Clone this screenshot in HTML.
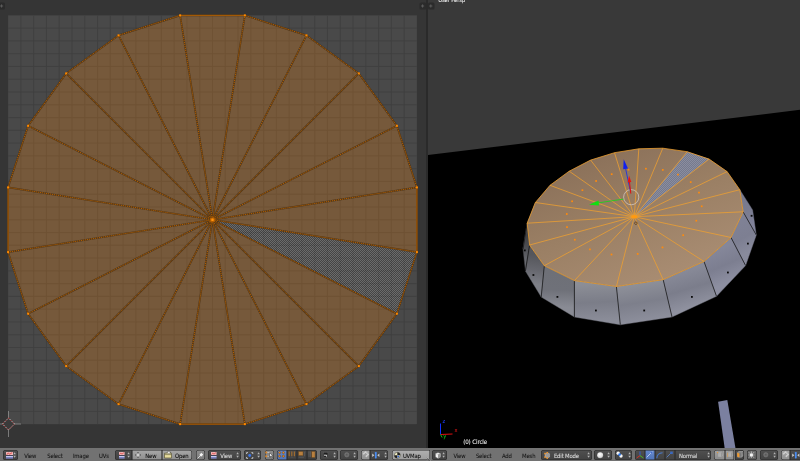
<!DOCTYPE html>
<html><head><meta charset="utf-8"><title>Blender</title>
<style>
html,body{margin:0;padding:0;}
body{width:800px;height:461px;overflow:hidden;background:#353535;position:relative;font-family:"Liberation Sans","DejaVu Sans",sans-serif;}
.t{position:absolute;white-space:nowrap;font-family:"DejaVu Sans Condensed","DejaVu Sans","Liberation Sans",sans-serif;font-size:5.9px;letter-spacing:-0.15px;line-height:7px;height:7px;color:#0a0a0a;-webkit-text-stroke:0.06px currentColor;}
.tl{position:absolute;left:0;top:0;width:800px;height:461px;will-change:transform;}
.hdr{position:absolute;height:14px;background:#727272;}
.b{position:absolute;top:450px;height:9.6px;box-sizing:border-box;box-shadow:inset 0 0 0 0.55px #2a2a2a;}
.i{position:absolute;overflow:visible;}
.dk{background:linear-gradient(#505050,#424242);}
.dk2{background:linear-gradient(#4a4a4a,#3c3c3c);}
.md{background:linear-gradient(#8e8e8e,#7c7c7c);}
.md2{background:linear-gradient(#6c6c6c,#5c5c5c);}
.lt{background:linear-gradient(#a8a8a8,#8e8e8e);}
.lt2{background:linear-gradient(#b0b0b0,#9c9c9c);}
.lt3{background:linear-gradient(#a2a2a2,#8c8c8c);}
.bl{background:linear-gradient(#6488cc,#5074b8);}
</style></head><body>
<svg width="800" height="461" viewBox="0 0 800 461" style="position:absolute;left:0;top:0"><defs>
<pattern id="chk" width="2" height="2" patternUnits="userSpaceOnUse"><rect width="2" height="2" fill="#000" fill-opacity="0.05"/><rect width="1" height="1" fill="#fff" fill-opacity="0.2"/><rect x="1" y="1" width="1" height="1" fill="#fff" fill-opacity="0.2"/></pattern>
<pattern id="chk3" width="2" height="2" patternUnits="userSpaceOnUse"><rect width="2" height="2" fill="#767a8c"/><rect width="1" height="1" fill="#8a8da0"/><rect x="1" y="1" width="1" height="1" fill="#8a8da0"/></pattern>
<clipPath id="cl"><rect x="0" y="0" width="426" height="448"/></clipPath>
<clipPath id="cr"><rect x="428" y="0" width="372" height="448"/></clipPath>
<linearGradient id="topg" gradientUnits="userSpaceOnUse" x1="605" y1="150" x2="660" y2="287"><stop offset="0" stop-color="#8b715a"/><stop offset="0.45" stop-color="#9a7f64"/><stop offset="1" stop-color="#a98d73"/></linearGradient>
</defs><rect x="0" y="0" width="426" height="448" fill="#353535"/><rect x="8.1" y="15.35" width="408.8" height="408.8" fill="#494949"/><path d="M20.88 15.35V424.15000000000003M8.1 28.12H416.90000000000003M33.65 15.35V424.15000000000003M8.1 40.90H416.90000000000003M46.43 15.35V424.15000000000003M8.1 53.68H416.90000000000003M59.20 15.35V424.15000000000003M8.1 66.45H416.90000000000003M71.97 15.35V424.15000000000003M8.1 79.22H416.90000000000003M84.75 15.35V424.15000000000003M8.1 92.00H416.90000000000003M97.52 15.35V424.15000000000003M8.1 104.77H416.90000000000003M110.30 15.35V424.15000000000003M8.1 117.55H416.90000000000003M123.08 15.35V424.15000000000003M8.1 130.33H416.90000000000003M135.85 15.35V424.15000000000003M8.1 143.10H416.90000000000003M148.62 15.35V424.15000000000003M8.1 155.88H416.90000000000003M161.40 15.35V424.15000000000003M8.1 168.65H416.90000000000003M174.18 15.35V424.15000000000003M8.1 181.43H416.90000000000003M186.95 15.35V424.15000000000003M8.1 194.20H416.90000000000003M199.72 15.35V424.15000000000003M8.1 206.97H416.90000000000003M212.50 15.35V424.15000000000003M8.1 219.75H416.90000000000003M225.28 15.35V424.15000000000003M8.1 232.53H416.90000000000003M238.05 15.35V424.15000000000003M8.1 245.30H416.90000000000003M250.82 15.35V424.15000000000003M8.1 258.07H416.90000000000003M263.60 15.35V424.15000000000003M8.1 270.85H416.90000000000003M276.38 15.35V424.15000000000003M8.1 283.63H416.90000000000003M289.15 15.35V424.15000000000003M8.1 296.40H416.90000000000003M301.93 15.35V424.15000000000003M8.1 309.18H416.90000000000003M314.70 15.35V424.15000000000003M8.1 321.95H416.90000000000003M327.48 15.35V424.15000000000003M8.1 334.73H416.90000000000003M340.25 15.35V424.15000000000003M8.1 347.50H416.90000000000003M353.03 15.35V424.15000000000003M8.1 360.28H416.90000000000003M365.80 15.35V424.15000000000003M8.1 373.05H416.90000000000003M378.58 15.35V424.15000000000003M8.1 385.83H416.90000000000003M391.35 15.35V424.15000000000003M8.1 398.60H416.90000000000003M404.13 15.35V424.15000000000003M8.1 411.38H416.90000000000003" stroke="#3f3f3f" stroke-width="0.9" fill="none"/><path d="M212.5 219.75L416.90 187.38L396.89 125.80ZM212.5 219.75L396.89 125.80L358.84 73.41ZM212.5 219.75L358.84 73.41L306.45 35.36ZM212.5 219.75L306.45 35.36L244.87 15.35ZM212.5 219.75L244.87 15.35L180.13 15.35ZM212.5 219.75L180.13 15.35L118.55 35.36ZM212.5 219.75L118.55 35.36L66.16 73.41ZM212.5 219.75L66.16 73.41L28.11 125.80ZM212.5 219.75L28.11 125.80L8.10 187.38ZM212.5 219.75L8.10 187.38L8.10 252.12ZM212.5 219.75L8.10 252.12L28.11 313.70ZM212.5 219.75L28.11 313.70L66.16 366.09ZM212.5 219.75L66.16 366.09L118.55 404.14ZM212.5 219.75L118.55 404.14L180.13 424.15ZM212.5 219.75L180.13 424.15L244.87 424.15ZM212.5 219.75L244.87 424.15L306.45 404.14ZM212.5 219.75L306.45 404.14L358.84 366.09ZM212.5 219.75L358.84 366.09L396.89 313.70ZM212.5 219.75L416.90 252.12L416.90 187.38Z" fill="rgb(255,138,16)" fill-opacity="0.247" stroke="none"/><path d="M212.5 219.75L396.89 313.70L416.90 252.12Z" fill="url(#chk)"/><path d="M416.90 187.38L396.89 125.80M212.5 219.75L416.90 187.38M396.89 125.80L358.84 73.41M212.5 219.75L396.89 125.80M358.84 73.41L306.45 35.36M212.5 219.75L358.84 73.41M306.45 35.36L244.87 15.35M212.5 219.75L306.45 35.36M244.87 15.35L180.13 15.35M212.5 219.75L244.87 15.35M180.13 15.35L118.55 35.36M212.5 219.75L180.13 15.35M118.55 35.36L66.16 73.41M212.5 219.75L118.55 35.36M66.16 73.41L28.11 125.80M212.5 219.75L66.16 73.41M28.11 125.80L8.10 187.38M212.5 219.75L28.11 125.80M8.10 187.38L8.10 252.12M212.5 219.75L8.10 187.38M8.10 252.12L28.11 313.70M212.5 219.75L8.10 252.12M28.11 313.70L66.16 366.09M212.5 219.75L28.11 313.70M66.16 366.09L118.55 404.14M212.5 219.75L66.16 366.09M118.55 404.14L180.13 424.15M212.5 219.75L118.55 404.14M180.13 424.15L244.87 424.15M212.5 219.75L180.13 424.15M244.87 424.15L306.45 404.14M212.5 219.75L244.87 424.15M306.45 404.14L358.84 366.09M212.5 219.75L306.45 404.14M358.84 366.09L396.89 313.70M212.5 219.75L358.84 366.09M396.89 313.70L416.90 252.12M212.5 219.75L396.89 313.70M416.90 252.12L416.90 187.38M212.5 219.75L416.90 252.12" stroke="#4c341a" stroke-width="1.7" fill="none"/><g stroke="#b46000" stroke-width="1.0" stroke-dasharray="1.2 0.8" fill="none"><path d="M416.90 187.38L396.89 125.80" stroke-dashoffset="0.52"/><path d="M416.90 187.38L212.5 219.75" stroke-dashoffset="1.20"/><path d="M396.89 125.80L358.84 73.41" stroke-dashoffset="0.81"/><path d="M396.89 125.80L212.5 219.75" stroke-dashoffset="1.33"/><path d="M358.84 73.41L306.45 35.36" stroke-dashoffset="1.38"/><path d="M358.84 73.41L212.5 219.75" stroke-dashoffset="0.14"/><path d="M306.45 35.36L244.87 15.35" stroke-dashoffset="0.03"/><path d="M306.45 35.36L212.5 219.75" stroke-dashoffset="1.84"/><path d="M244.87 15.35L180.13 15.35" stroke-dashoffset="0.57" stroke-dasharray="none"/><path d="M244.87 15.35L212.5 219.75" stroke-dashoffset="0.52"/><path d="M180.13 15.35L118.55 35.36" stroke-dashoffset="2.19"/><path d="M180.13 15.35L212.5 219.75" stroke-dashoffset="1.03"/><path d="M118.55 35.36L66.16 73.41" stroke-dashoffset="1.84"/><path d="M118.55 35.36L212.5 219.75" stroke-dashoffset="1.05"/><path d="M66.16 73.41L28.11 125.80" stroke-dashoffset="1.41"/><path d="M66.16 73.41L212.5 219.75" stroke-dashoffset="0.33"/><path d="M28.11 125.80L8.10 187.38" stroke-dashoffset="1.40"/><path d="M28.11 125.80L212.5 219.75" stroke-dashoffset="1.91"/><path d="M8.10 187.38L8.10 252.12" stroke-dashoffset="1.15" stroke-dasharray="none"/><path d="M8.10 187.38L212.5 219.75" stroke-dashoffset="1.63"/><path d="M8.10 252.12L28.11 313.70" stroke-dashoffset="1.48"/><path d="M8.10 252.12L212.5 219.75" stroke-dashoffset="0.14"/><path d="M28.11 313.70L66.16 366.09" stroke-dashoffset="1.67"/><path d="M28.11 313.70L212.5 219.75" stroke-dashoffset="1.30"/><path d="M66.16 366.09L118.55 404.14" stroke-dashoffset="0.66"/><path d="M66.16 366.09L212.5 219.75" stroke-dashoffset="0.07"/><path d="M118.55 404.14L180.13 424.15" stroke-dashoffset="1.90"/><path d="M118.55 404.14L212.5 219.75" stroke-dashoffset="1.04"/><path d="M180.13 424.15L244.87 424.15" stroke-dashoffset="1.58" stroke-dasharray="none"/><path d="M180.13 424.15L212.5 219.75" stroke-dashoffset="1.93"/><path d="M244.87 424.15L306.45 404.14" stroke-dashoffset="1.57"/><path d="M244.87 424.15L212.5 219.75" stroke-dashoffset="2.03"/><path d="M306.45 404.14L358.84 366.09" stroke-dashoffset="0.87"/><path d="M306.45 404.14L212.5 219.75" stroke-dashoffset="1.76"/><path d="M358.84 366.09L396.89 313.70" stroke-dashoffset="0.98"/><path d="M358.84 366.09L212.5 219.75" stroke-dashoffset="2.06"/><path d="M396.89 313.70L416.90 252.12" stroke-dashoffset="1.93"/><path d="M396.89 313.70L212.5 219.75" stroke-dashoffset="0.21"/><path d="M416.90 252.12L416.90 187.38" stroke-dashoffset="0.30" stroke-dasharray="none"/><path d="M416.90 252.12L212.5 219.75" stroke-dashoffset="0.48"/></g><rect x="415.90" y="186.38" width="2" height="2" fill="#ff8a00"/><rect x="395.89" y="124.80" width="2" height="2" fill="#ff8a00"/><rect x="357.84" y="72.41" width="2" height="2" fill="#ff8a00"/><rect x="305.45" y="34.36" width="2" height="2" fill="#ff8a00"/><rect x="243.87" y="14.35" width="2" height="2" fill="#ff8a00"/><rect x="179.13" y="14.35" width="2" height="2" fill="#ff8a00"/><rect x="117.55" y="34.36" width="2" height="2" fill="#ff8a00"/><rect x="65.16" y="72.41" width="2" height="2" fill="#ff8a00"/><rect x="27.11" y="124.80" width="2" height="2" fill="#ff8a00"/><rect x="7.10" y="186.38" width="2" height="2" fill="#ff8a00"/><rect x="7.10" y="251.12" width="2" height="2" fill="#ff8a00"/><rect x="27.11" y="312.70" width="2" height="2" fill="#ff8a00"/><rect x="65.16" y="365.09" width="2" height="2" fill="#ff8a00"/><rect x="117.55" y="403.14" width="2" height="2" fill="#ff8a00"/><rect x="179.13" y="423.15" width="2" height="2" fill="#ff8a00"/><rect x="243.87" y="423.15" width="2" height="2" fill="#ff8a00"/><rect x="305.45" y="403.14" width="2" height="2" fill="#ff8a00"/><rect x="357.84" y="365.09" width="2" height="2" fill="#ff8a00"/><rect x="395.89" y="312.70" width="2" height="2" fill="#ff8a00"/><rect x="415.90" y="251.12" width="2" height="2" fill="#ff8a00"/><circle cx="212.5" cy="219.75" r="2.6" fill="#c06400" fill-opacity="0.7"/><rect x="211.3" y="218.55" width="2.4" height="2.4" rx="0.5" fill="#ff920c"/><g stroke="#aaa" stroke-width="0.6" fill="none"><path d="M8.5 411V437M-4 424H21"/></g><path d="M8.5 418L14.5 424L8.5 430L2.5 424Z" fill="#3a3a3a" stroke="#c02020" stroke-width="0.8" stroke-dasharray="1.5 1.5"/><path d="M8.5 418L14.5 424L8.5 430L2.5 424Z" fill="none" stroke="#ddd" stroke-width="0.8" stroke-dasharray="1.5 1.5" stroke-dashoffset="1.5"/><rect x="-2" y="2.5" width="7" height="7" rx="1.5" fill="#2b2b2b"/><path d="M0 6H3.2M1.6 4.4V7.6" stroke="#666" stroke-width="0.8"/><rect x="419.5" y="2.5" width="7" height="7" rx="1.5" fill="#2b2b2b"/><path d="M421 6H424.2M422.6 4.4V7.6" stroke="#666" stroke-width="0.8"/><rect x="426" y="0" width="2" height="461" fill="#2a2a2a"/><rect x="428" y="0" width="372" height="448" fill="#393939"/><path d="M428 155.1L800 109.8V448H428Z" fill="#000"/><rect x="428" y="2.5" width="6.5" height="7" rx="1.5" fill="#2b2b2b"/><path d="M429.2 6H432.4M430.8 4.4V7.6" stroke="#666" stroke-width="0.8"/><path d="M718.1 401.7L727.3 400L735.5 448.2H724.7Z" fill="#7b80a0"/><linearGradient id="sg5" gradientUnits="userSpaceOnUse" x1="741.5" y1="200.8" x2="754.5" y2="222.4"><stop offset="0" stop-color="#787a8e"/><stop offset="0.5" stop-color="#7a7c90"/><stop offset="1" stop-color="#80829a"/></linearGradient><path d="M739.8 189.7L743.1 211.8L756.3 235.0L752.6 209.9Z" fill="url(#sg5)" stroke="#7a7c90" stroke-width="0.4"/><linearGradient id="sg6" gradientUnits="userSpaceOnUse" x1="737.0" y1="224.7" x2="751.0" y2="250.3"><stop offset="0" stop-color="#7f8195"/><stop offset="0.5" stop-color="#7d7f92"/><stop offset="1" stop-color="#888a9c"/></linearGradient><path d="M743.1 211.8L731.0 237.5L745.6 265.6L756.3 235.0Z" fill="url(#sg6)" stroke="#7d7f92" stroke-width="0.4"/><linearGradient id="sg7" gradientUnits="userSpaceOnUse" x1="717.5" y1="249.5" x2="731.0" y2="281.0"><stop offset="0" stop-color="#85879a"/><stop offset="0.5" stop-color="#7c7e90"/><stop offset="1" stop-color="#8d8fa1"/></linearGradient><path d="M731.0 237.5L704.0 261.5L716.5 296.3L745.6 265.6Z" fill="url(#sg7)" stroke="#7c7e90" stroke-width="0.4"/><linearGradient id="sg8" gradientUnits="userSpaceOnUse" x1="683.6" y1="270.6" x2="694.2" y2="306.6"><stop offset="0" stop-color="#888a98"/><stop offset="0.5" stop-color="#7b7d8b"/><stop offset="1" stop-color="#8f919f"/></linearGradient><path d="M704.0 261.5L663.2 279.7L672.0 317.0L716.5 296.3Z" fill="url(#sg8)" stroke="#7b7d8b" stroke-width="0.4"/><linearGradient id="sg9" gradientUnits="userSpaceOnUse" x1="639.8" y1="283.1" x2="646.1" y2="320.9"><stop offset="0" stop-color="#8e9099"/><stop offset="0.5" stop-color="#7d7f8b"/><stop offset="1" stop-color="#8d8f9c"/></linearGradient><path d="M663.2 279.7L616.4 286.5L620.3 324.8L672.0 317.0Z" fill="url(#sg9)" stroke="#7d7f8b" stroke-width="0.4"/><linearGradient id="sg10" gradientUnits="userSpaceOnUse" x1="595.4" y1="283.6" x2="597.3" y2="320.9"><stop offset="0" stop-color="#8c8e96"/><stop offset="0.5" stop-color="#7b7d88"/><stop offset="1" stop-color="#8b8d99"/></linearGradient><path d="M616.4 286.5L574.4 280.6L574.4 317.0L620.3 324.8Z" fill="url(#sg10)" stroke="#7b7d88" stroke-width="0.4"/><linearGradient id="sg11" gradientUnits="userSpaceOnUse" x1="559.3" y1="273.1" x2="557.8" y2="307.0"><stop offset="0" stop-color="#6e7077"/><stop offset="0.5" stop-color="#6f7179"/><stop offset="1" stop-color="#898b94"/></linearGradient><path d="M574.4 280.6L544.3 265.7L541.2 297.0L574.4 317.0Z" fill="url(#sg11)" stroke="#6f7179" stroke-width="0.4"/><linearGradient id="sg12" gradientUnits="userSpaceOnUse" x1="537.0" y1="255.3" x2="533.3" y2="284.0"><stop offset="0" stop-color="#55565b"/><stop offset="0.5" stop-color="#66676e"/><stop offset="1" stop-color="#7d7f87"/></linearGradient><path d="M544.3 265.7L529.6 245.0L525.4 271.0L541.2 297.0Z" fill="url(#sg12)" stroke="#66676e" stroke-width="0.4"/><linearGradient id="sg13" gradientUnits="userSpaceOnUse" x1="528.4" y1="234.1" x2="524.2" y2="260.0"><stop offset="0" stop-color="#3e3f42"/><stop offset="0.5" stop-color="#4c4d52"/><stop offset="1" stop-color="#66686e"/></linearGradient><path d="M529.6 245.0L527.2 223.2L523.0 249.0L525.4 271.0Z" fill="url(#sg13)" stroke="#4c4d52" stroke-width="0.4"/><linearGradient id="sg14" gradientUnits="userSpaceOnUse" x1="531.3" y1="212.8" x2="525.2" y2="237.5"><stop offset="0" stop-color="#48494c"/><stop offset="0.5" stop-color="#4c4d50"/><stop offset="1" stop-color="#54565a"/></linearGradient><path d="M527.2 223.2L535.4 202.5L527.5 226.0L523.0 249.0Z" fill="url(#sg14)" stroke="#4c4d50" stroke-width="0.4"/><path d="M743.1 211.8L756.3 235.0M731.0 237.5L745.6 265.6M704.0 261.5L716.5 296.3M663.2 279.7L672.0 317.0M616.4 286.5L620.3 324.8M574.4 280.6L574.4 317.0M544.3 265.7L541.2 297.0M529.6 245.0L525.4 271.0M527.2 223.2L523.0 249.0" stroke="#111" stroke-width="0.7" fill="none"/><rect x="750.7" y="214.9" width="1.8" height="1.8" fill="#0a0a0a"/><rect x="747.0" y="242.7" width="1.8" height="1.8" fill="#0a0a0a"/><rect x="727.0" y="271.6" width="1.8" height="1.8" fill="#0a0a0a"/><rect x="691.0" y="296.0" width="1.8" height="1.8" fill="#0a0a0a"/><rect x="643.3" y="309.6" width="1.8" height="1.8" fill="#0a0a0a"/><rect x="595.0" y="309.6" width="1.8" height="1.8" fill="#0a0a0a"/><rect x="556.5" y="296.0" width="1.8" height="1.8" fill="#0a0a0a"/><rect x="532.5" y="274.1" width="1.8" height="1.8" fill="#0a0a0a"/><rect x="523.9" y="249.5" width="1.8" height="1.8" fill="#0a0a0a"/><polygon points="638.8,148.8 662.8,148.2 687.2,151.7 709.1,159.1 727.1,171.6 739.8,189.7 743.1,211.8 731.0,237.5 704.0,261.5 663.2,279.7 616.4,286.5 574.4,280.6 544.3,265.7 529.6,245.0 527.2,223.2 535.4,202.5 550.0,185.3 569.2,171.2 590.6,160.1 614.5,152.7" fill="url(#topg)"/><path d="M634.3 216.7L687.2 151.7L709.1 159.1Z" fill="url(#chk3)"/><path d="M638.8 148.8L662.8 148.2M634.3 216.7L638.8 148.8M662.8 148.2L687.2 151.7M634.3 216.7L662.8 148.2M687.2 151.7L709.1 159.1M634.3 216.7L687.2 151.7M709.1 159.1L727.1 171.6M634.3 216.7L709.1 159.1M727.1 171.6L739.8 189.7M634.3 216.7L727.1 171.6M739.8 189.7L743.1 211.8M634.3 216.7L739.8 189.7M743.1 211.8L731.0 237.5M634.3 216.7L743.1 211.8M731.0 237.5L704.0 261.5M634.3 216.7L731.0 237.5M704.0 261.5L663.2 279.7M634.3 216.7L704.0 261.5M663.2 279.7L616.4 286.5M634.3 216.7L663.2 279.7M616.4 286.5L574.4 280.6M634.3 216.7L616.4 286.5M574.4 280.6L544.3 265.7M634.3 216.7L574.4 280.6M544.3 265.7L529.6 245.0M634.3 216.7L544.3 265.7M529.6 245.0L527.2 223.2M634.3 216.7L529.6 245.0M527.2 223.2L535.4 202.5M634.3 216.7L527.2 223.2M535.4 202.5L550.0 185.3M634.3 216.7L535.4 202.5M550.0 185.3L569.2 171.2M634.3 216.7L550.0 185.3M569.2 171.2L590.6 160.1M634.3 216.7L569.2 171.2M590.6 160.1L614.5 152.7M634.3 216.7L590.6 160.1M614.5 152.7L638.8 148.8M634.3 216.7L614.5 152.7" stroke="#eea030" stroke-width="0.78" fill="none"/><rect x="645.05" y="167.85" width="1.7" height="1.7" fill="#ff8a0c"/><rect x="661.95" y="169.05" width="1.7" height="1.7" fill="#ff8a0c"/><rect x="677.15" y="173.75" width="1.7" height="1.7" fill="#ff8a0c"/><rect x="689.85" y="181.25" width="1.7" height="1.7" fill="#ff8a0c"/><rect x="698.15" y="191.75" width="1.7" height="1.7" fill="#ff8a0c"/><rect x="700.85" y="205.45" width="1.7" height="1.7" fill="#ff8a0c"/><rect x="695.45" y="219.85" width="1.7" height="1.7" fill="#ff8a0c"/><rect x="682.35" y="234.35" width="1.7" height="1.7" fill="#ff8a0c"/><rect x="661.65" y="246.55" width="1.7" height="1.7" fill="#ff8a0c"/><rect x="636.85" y="253.05" width="1.7" height="1.7" fill="#ff8a0c"/><rect x="610.65" y="253.65" width="1.7" height="1.7" fill="#ff8a0c"/><rect x="589.05" y="248.55" width="1.7" height="1.7" fill="#ff8a0c"/><rect x="573.95" y="238.85" width="1.7" height="1.7" fill="#ff8a0c"/><rect x="566.15" y="226.25" width="1.7" height="1.7" fill="#ff8a0c"/><rect x="565.95" y="213.15" width="1.7" height="1.7" fill="#ff8a0c"/><rect x="571.25" y="200.45" width="1.7" height="1.7" fill="#ff8a0c"/><rect x="581.55" y="189.35" width="1.7" height="1.7" fill="#ff8a0c"/><rect x="595.25" y="180.15" width="1.7" height="1.7" fill="#ff8a0c"/><rect x="610.85" y="173.35" width="1.7" height="1.7" fill="#ff8a0c"/><rect x="627.65" y="168.85" width="1.7" height="1.7" fill="#ff8a0c"/><ellipse cx="634.3" cy="216.7" rx="3.1" ry="1.7" fill="#ff9a10"/><circle cx="635.9" cy="223.2" r="1.25" fill="#c09868" stroke="#40260e" stroke-width="0.65"/><circle cx="631.2" cy="197.2" r="7.6" fill="none" stroke="#d8d0c8" stroke-width="0.7"/><path d="M623.4 199.1L598.2 202.9" stroke="#1fd01f" stroke-width="0.9"/><path d="M589 204.7L598.6 200.6L598.9 205.4Z" fill="#10e010"/><path d="M630.3 190.8L625.6 168.7" stroke="#2030e0" stroke-width="0.9"/><path d="M623.7 159.3L628 168.4L623.2 169.2Z" fill="#1020f0"/><path d="M630.8 193.6L629.5 182" stroke="#e01010" stroke-width="1"/><path d="M629.1 175.8L631.3 182L627.6 182.4Z" fill="#f01010"/><path d="M440.5 434.5V423.5" stroke="#1030ff" stroke-width="1"/><path d="M440.5 434.5L452.5 434" stroke="#e01010" stroke-width="1"/><path d="M440.5 434.5L442.2 437.5" stroke="#10c010" stroke-width="1"/></svg>
<div class="tl"><div class="hdr" style="left:0;width:427.4px;top:447.5px"></div>
<div class="hdr" style="left:427.4px;width:372.6px;top:447.8px"></div>
<div class="b dk" style="left:3.4px;width:14.5px;border-radius:2.5px;"></div>
<svg class="i" style="left:5.6px;top:451.6px" width="7" height="6.6" viewBox="0 0 7 6.6"><g transform="scale(1.25,1)"><rect x="0" y="0" width="5.6" height="3.2" fill="#efb4b4"/><path d="M0.5 2.5L1.8 1.2L3 2.1L4.9 0.7" stroke="#d84848" stroke-width="0.8" fill="none"/><rect x="0" y="3.1" width="5.6" height="0.8" fill="#2a2a40"/><rect x="0" y="3.9" width="5.6" height="1.2" fill="#c4c8ec"/><rect x="0" y="5.1" width="5.6" height="1.5" fill="#8088cc"/></g></svg>
<svg class="i" style="left:13.4px;top:452.0px" width="3.2" height="6" viewBox="0 0 3.2 6"><path d="M0.3 2.2L1.6 0.2L2.9 2.2ZM0.3 3.8L1.6 5.8L2.9 3.8Z" fill="#b4b4b4"/></svg>
<div class="t" style="left:24.2px;top:452.8px;color:#161616;">View</div>
<div class="t" style="left:47.2px;top:452.8px;color:#161616;">Select</div>
<div class="t" style="left:72.9px;top:452.8px;color:#161616;">Image</div>
<div class="t" style="left:99.0px;top:452.8px;color:#161616;">UVs</div>
<div class="b dk" style="left:115.4px;width:16.6px;border-radius:2.5px 0 0 2.5px;"></div>
<svg class="i" style="left:118.8px;top:451.6px" width="5.6" height="6.6" viewBox="0 0 5.6 6.6"><rect x="0" y="0" width="5.6" height="3.2" fill="#efb4b4"/><path d="M0.5 2.5L1.8 1.2L3 2.1L4.9 0.7" stroke="#d84848" stroke-width="0.8" fill="none"/><rect x="0" y="3.1" width="5.6" height="0.8" fill="#2a2a40"/><rect x="0" y="3.9" width="5.6" height="1.2" fill="#c4c8ec"/><rect x="0" y="5.1" width="5.6" height="1.5" fill="#8088cc"/></svg>
<svg class="i" style="left:126.8px;top:452.0px" width="3.2" height="6" viewBox="0 0 3.2 6"><path d="M0.3 2.2L1.6 0.2L2.9 2.2ZM0.3 3.8L1.6 5.8L2.9 3.8Z" fill="#b4b4b4"/></svg>
<div class="b lt" style="left:132.0px;width:29.6px;border-radius:0;"></div>
<svg class="i" style="left:134.6px;top:452.0px" width="6" height="6" viewBox="0 0 6 6"><path d="M3 0.3V5.7M0.3 3H5.7" stroke="#3a3a3a" stroke-width="1.9"/><path d="M3 0.7V5.3M0.7 3H5.3" stroke="#fff" stroke-width="1.0"/></svg>
<div class="t" style="left:145.3px;top:452.8px;color:#0c0c0c;">New</div>
<div class="b lt" style="left:161.6px;width:30.6px;border-radius:0 2.5px 2.5px 0;"></div>
<svg class="i" style="left:164.2px;top:451.2px" width="8" height="7.4" viewBox="0 0 8 7.4"><path d="M0.5 2.2H2.6L3.2 1.2H6.4V2.2H7.5V6.9H0.5Z" fill="#d9cf92" stroke="#4a4630" stroke-width="0.6"/><path d="M3.6 0.4H6V2.6H3.6Z" fill="#eee" stroke="#555" stroke-width="0.4"/><path d="M0.5 3.6H7.5V6.9H0.5Z" fill="#e6dc9e" stroke="#4a4630" stroke-width="0.5"/></svg>
<div class="t" style="left:175.0px;top:452.8px;color:#0c0c0c;">Open</div>
<div class="b md" style="left:195.9px;width:9.3px;border-radius:2.5px;"></div>
<svg class="i" style="left:197.2px;top:451.6px" width="7" height="7" viewBox="0 0 7 7"><path d="M0.6 6.4L3 4" stroke="#eee" stroke-width="0.8"/><path d="M2 3L4 5L5 4.4L6.4 2.6L4.4 0.6L2.6 2Z" fill="#f4f4f4" stroke="#555" stroke-width="0.4"/></svg>
<div class="b dk" style="left:208.4px;width:32.6px;border-radius:2.5px;"></div>
<svg class="i" style="left:211.4px;top:451.6px" width="5.6" height="6.6" viewBox="0 0 5.6 6.6"><rect x="0" y="0" width="5.6" height="3.2" fill="#efb4b4"/><path d="M0.5 2.5L1.8 1.2L3 2.1L4.9 0.7" stroke="#d84848" stroke-width="0.8" fill="none"/><rect x="0" y="3.1" width="5.6" height="0.8" fill="#2a2a40"/><rect x="0" y="3.9" width="5.6" height="1.2" fill="#c4c8ec"/><rect x="0" y="5.1" width="5.6" height="1.5" fill="#8088cc"/></svg>
<div class="t" style="left:220.2px;top:452.8px;color:#e0e0e0;-webkit-text-stroke:0.04px currentColor;">View</div>
<svg class="i" style="left:236.3px;top:452.0px" width="3.2" height="6" viewBox="0 0 3.2 6"><path d="M0.3 2.2L1.6 0.2L2.9 2.2ZM0.3 3.8L1.6 5.8L2.9 3.8Z" fill="#b4b4b4"/></svg>
<div class="b dk" style="left:244.2px;width:17.2px;border-radius:2.5px;"></div>
<svg class="i" style="left:246.2px;top:451.6px" width="7.4" height="7" viewBox="0 0 7.4 7"><path d="M2 0.6H0.6V2M5.4 0.6H6.8V2M2 6.4H0.6V5M5.4 6.4H6.8V5" stroke="#ddd" stroke-width="0.8" fill="none"/><circle cx="3.7" cy="3.5" r="1.4" fill="#3a78f0"/></svg>
<svg class="i" style="left:256.7px;top:452.0px" width="3.2" height="6" viewBox="0 0 3.2 6"><path d="M0.3 2.2L1.6 0.2L2.9 2.2ZM0.3 3.8L1.6 5.8L2.9 3.8Z" fill="#b4b4b4"/></svg>
<div class="b md" style="left:264.7px;width:9.7px;border-radius:2.5px;"></div>
<svg class="i" style="left:265.4px;top:451.3px" width="9" height="7.6" viewBox="0 0 9 7.6"><rect x="0.3" y="0.6" width="1.8" height="1.8" fill="#e08828"/><rect x="0.3" y="4.4" width="1.8" height="1.8" fill="#e08828"/><path d="M2.4 1.5H5M2.4 5.3H4" stroke="#ddd" stroke-width="0.6"/><path d="M4.6 1.8L7.6 4.6L6.4 4.9L7.2 6.6L6.4 7L5.6 5.3L4.6 6Z" fill="#fff" stroke="#222" stroke-width="0.5"/></svg>
<div class="b bl" style="left:277.1px;width:9.9px;border-radius:2.5px 0 0 2.5px;"></div>
<svg class="i" style="left:278.4px;top:451.4px" width="7.4" height="7" viewBox="0 0 7.4 7"><g fill="#e88a20" stroke="#5a3a10" stroke-width="0.4"><circle cx="1.6" cy="1.6" r="1.1"/><circle cx="5.4" cy="1.6" r="1.1"/><circle cx="1.6" cy="5.2" r="1.1"/><circle cx="5.4" cy="5.2" r="1.1"/></g></svg>
<div class="b dk2" style="left:287.0px;width:9.8px;border-radius:0;"></div>
<svg class="i" style="left:288.2px;top:451.4px" width="7.6" height="7" viewBox="0 0 7.6 7"><path d="M1.2 0.4V5.2M3.8 0.4V5.2M6.4 0.4V5.2" stroke="#a06c30" stroke-width="1.2"/><path d="M0.4 6.2H7.2" stroke="#666" stroke-width="0.6" stroke-dasharray="0.8 0.5"/></svg>
<div class="b dk2" style="left:296.8px;width:9.9px;border-radius:0;"></div>
<svg class="i" style="left:298.0px;top:451.4px" width="7.6" height="7" viewBox="0 0 7.6 7"><rect x="0.6" y="0.6" width="4.4" height="4" fill="#b88040" stroke="#6a4418" stroke-width="0.4"/><path d="M6.4 0.8V5.4M0.6 6.2H6" stroke="#666" stroke-width="0.6"/></svg>
<div class="b dk2" style="left:306.7px;width:10.0px;border-radius:0 2.5px 2.5px 0;"></div>
<svg class="i" style="left:308.0px;top:451.4px" width="7.6" height="7" viewBox="0 0 7.6 7"><path d="M1 0.6V6.2M2.4 0.6V6.2" stroke="#666" stroke-width="0.7"/><rect x="3.8" y="0.5" width="3.2" height="6" fill="#b88040" stroke="#6a4418" stroke-width="0.4"/></svg>
<div class="b dk" style="left:320.3px;width:17.3px;border-radius:2.5px;"></div>
<svg class="i" style="left:323.4px;top:452.0px" width="5.4" height="5.6" viewBox="0 0 5.4 5.6"><rect x="0.3" y="0.3" width="4.6" height="4.8" fill="#1e1e1e" stroke="#666" stroke-width="0.4"/><path d="M1 3.2H3.6V4.6" stroke="#eee" stroke-width="0.9" fill="none"/></svg>
<svg class="i" style="left:332.8px;top:452.0px" width="3.2" height="6" viewBox="0 0 3.2 6"><path d="M0.3 2.2L1.6 0.2L2.9 2.2ZM0.3 3.8L1.6 5.8L2.9 3.8Z" fill="#b4b4b4"/></svg>
<div class="b dk" style="left:340.4px;width:17.5px;border-radius:2.5px;"></div>
<svg class="i" style="left:343.8px;top:452.0px" width="5.6" height="5.6" viewBox="0 0 5.6 5.6"><circle cx="2.8" cy="2.8" r="2.2" fill="#6a6a6a" stroke="#808080" stroke-width="0.5"/><circle cx="2.8" cy="2.8" r="0.7" fill="#555"/></svg>
<svg class="i" style="left:352.9px;top:452.0px" width="3.2" height="6" viewBox="0 0 3.2 6"><path d="M0.3 2.2L1.6 0.2L2.9 2.2ZM0.3 3.8L1.6 5.8L2.9 3.8Z" fill="#b4b4b4"/></svg>
<div class="b lt" style="left:360.8px;width:9.4px;border-radius:2.5px 0 0 2.5px;"></div>
<svg class="i" style="left:362.0px;top:451.4px" width="7.4" height="7" viewBox="0 0 7.4 7"><path d="M1.2 3.2L3.6 0.9L6.2 3.4L3.8 5.8" stroke="#e8e8e8" stroke-width="1.3" fill="none"/><path d="M1.2 3.2L3.6 0.9L6.2 3.4L3.8 5.8" stroke="#777" stroke-width="0.4" fill="none"/></svg>
<div class="b dk" style="left:370.2px;width:17.8px;border-radius:0 2.5px 2.5px 0;"></div>
<svg class="i" style="left:372.2px;top:451.7px" width="7.6" height="6.4" viewBox="0 0 7.6 6.4"><rect x="2.9" y="0" width="1.8" height="6.4" rx="0.6" fill="#4a8cf0"/><path d="M0.2 1.4L2.4 3.2L0.2 5ZM7.4 1.4L5.2 3.2L7.4 5Z" fill="#c8c8c8"/></svg>
<svg class="i" style="left:383.5px;top:452.0px" width="3.2" height="6" viewBox="0 0 3.2 6"><path d="M0.3 2.2L1.6 0.2L2.9 2.2ZM0.3 3.8L1.6 5.8L2.9 3.8Z" fill="#b4b4b4"/></svg>
<div class="b lt2" style="left:391.9px;width:38.1px;border-radius:2.5px 0 0 2.5px;"></div>
<svg class="i" style="left:393.8px;top:451.5px" width="6.6" height="6.6" viewBox="0 0 6.6 6.6"><circle cx="3.3" cy="3.3" r="3" fill="#f0ecc0" stroke="#333" stroke-width="0.5"/><path d="M3.3 0.3A3 3 0 0 1 6.3 3.3H3.3ZM3.3 6.3A3 3 0 0 1 0.3 3.3H3.3Z" fill="#222"/><circle cx="4.3" cy="4.4" r="1" fill="#3060d0"/></svg>
<div class="t" style="left:402.9px;top:452.8px;color:#0c0c0c;">UVMap</div>
<svg class="i" style="left:427.4px;top:456.5px" width="6" height="4.5" viewBox="0 0 6 4.5"><path d="M0 0L4.5 4.5M0 1.6L3 4.6M0 3.2L1.5 4.7" stroke="#bbb" stroke-width="0.5"/><path d="M0 0.8L4 4.8M0 2.4L2.2 4.6" stroke="#333" stroke-width="0.5"/></svg>
<div class="b dk" style="left:432.1px;width:14.5px;border-radius:2.5px;"></div>
<svg class="i" style="left:434.8px;top:451.6px" width="6" height="6.8" viewBox="0 0 6 6.8"><path d="M0.4 1.4L3 0.4L5.6 1.4V5L3 6.4L0.4 5Z" fill="#f2f2f2" stroke="#555" stroke-width="0.4"/><path d="M3 2.4V6.4L5.6 5V1.4Z" fill="#9a9a9a"/><path d="M0.4 1.4L3 2.4L5.6 1.4" stroke="#888" stroke-width="0.3" fill="none"/></svg>
<svg class="i" style="left:442.3px;top:452.0px" width="3.2" height="6" viewBox="0 0 3.2 6"><path d="M0.3 2.2L1.6 0.2L2.9 2.2ZM0.3 3.8L1.6 5.8L2.9 3.8Z" fill="#b4b4b4"/></svg>
<div class="t" style="left:453.4px;top:452.8px;color:#161616;">View</div>
<div class="t" style="left:475.9px;top:452.8px;color:#161616;">Select</div>
<div class="t" style="left:501.9px;top:452.8px;color:#161616;">Add</div>
<div class="t" style="left:522.0px;top:452.8px;color:#161616;">Mesh</div>
<div class="b dk" style="left:541.3px;width:50.4px;border-radius:2.5px;"></div>
<svg class="i" style="left:543.6px;top:451.5px" width="6.4" height="6.8" viewBox="0 0 6.4 6.8"><path d="M1 1.6L3.4 0.6L5.6 1.8V5L3.2 6.2L1 5Z" fill="#9a9a9a" stroke="#ccc" stroke-width="0.4"/><g fill="#f09020"><rect x="0.2" y="0.8" width="1.5" height="1.5"/><rect x="0.2" y="4.4" width="1.5" height="1.5"/><rect x="2.5" y="5.3" width="1.5" height="1.5"/><rect x="2.6" y="0" width="1.4" height="1.4"/></g></svg>
<div class="t" style="left:553.9px;top:452.8px;color:#e0e0e0;-webkit-text-stroke:0.04px currentColor;">Edit Mode</div>
<svg class="i" style="left:586.8px;top:452.0px" width="3.2" height="6" viewBox="0 0 3.2 6"><path d="M0.3 2.2L1.6 0.2L2.9 2.2ZM0.3 3.8L1.6 5.8L2.9 3.8Z" fill="#b4b4b4"/></svg>
<div class="b dk" style="left:594.3px;width:17.4px;border-radius:2.5px;"></div>
<svg class="i" style="left:597.0px;top:451.7px" width="6.4" height="6.4" viewBox="0 0 6.4 6.4"><defs><radialGradient id="sph" cx="0.4" cy="0.35" r="0.7"><stop offset="0" stop-color="#fff"/><stop offset="0.7" stop-color="#ddd"/><stop offset="1" stop-color="#999"/></radialGradient></defs><circle cx="3.2" cy="3.2" r="3" fill="url(#sph)"/></svg>
<svg class="i" style="left:607.2px;top:452.0px" width="3.2" height="6" viewBox="0 0 3.2 6"><path d="M0.3 2.2L1.6 0.2L2.9 2.2ZM0.3 3.8L1.6 5.8L2.9 3.8Z" fill="#b4b4b4"/></svg>
<div class="b dk" style="left:614.7px;width:17.3px;border-radius:2.5px;"></div>
<svg class="i" style="left:616.4px;top:451.4px" width="7.4" height="7.2" viewBox="0 0 7.4 7.2"><circle cx="2.2" cy="2.2" r="1.7" fill="#f4f4f4"/><circle cx="5" cy="5" r="1.7" fill="#f4f4f4"/><circle cx="3.6" cy="3.6" r="1.3" fill="#2a78f0"/></svg>
<svg class="i" style="left:627.5px;top:452.0px" width="3.2" height="6" viewBox="0 0 3.2 6"><path d="M0.3 2.2L1.6 0.2L2.9 2.2ZM0.3 3.8L1.6 5.8L2.9 3.8Z" fill="#b4b4b4"/></svg>
<div class="b dk" style="left:635.2px;width:9.8px;border-radius:2.5px 0 0 2.5px;"></div>
<svg class="i" style="left:636.2px;top:451.2px" width="8" height="7.6" viewBox="0 0 8 7.6"><path d="M4 0.4V4.6" stroke="#3060e0" stroke-width="0.9"/><path d="M4 4.6L0.6 7" stroke="#e03020" stroke-width="0.9"/><path d="M4 4.6L7.4 7" stroke="#50c020" stroke-width="0.9"/></svg>
<div class="b bl" style="left:645.0px;width:9.5px;border-radius:0;"></div>
<svg class="i" style="left:646.2px;top:451.4px" width="7.4" height="7" viewBox="0 0 7.4 7"><path d="M0.6 6.4L5 2" stroke="#dfe8ff" stroke-width="0.7"/><path d="M4 1.6L6.8 0.4L5.6 3.2Z" fill="#1c50c0" stroke="#dfe8ff" stroke-width="0.3"/></svg>
<div class="b dk" style="left:654.5px;width:10.2px;border-radius:0;"></div>
<svg class="i" style="left:655.8px;top:451.6px" width="7.4" height="7" viewBox="0 0 7.4 7"><path d="M0.8 6.2C1 3 3 1 6.6 0.8" stroke="#4878c8" stroke-width="1.1" fill="none"/></svg>
<div class="b dk" style="left:664.7px;width:10.3px;border-radius:0;"></div>
<svg class="i" style="left:666.0px;top:451.4px" width="7.4" height="7" viewBox="0 0 7.4 7"><path d="M0.6 6.4L5 2" stroke="#5a86d0" stroke-width="0.8"/><rect x="4.2" y="0.6" width="2.6" height="2.4" fill="#3a68c0"/></svg>
<div class="b dk" style="left:675.0px;width:36.3px;border-radius:0 2.5px 2.5px 0;"></div>
<div class="t" style="left:679.0px;top:452.8px;color:#e0e0e0;-webkit-text-stroke:0.04px currentColor;">Normal</div>
<svg class="i" style="left:706.8px;top:452.0px" width="3.2" height="6" viewBox="0 0 3.2 6"><path d="M0.3 2.2L1.6 0.2L2.9 2.2ZM0.3 3.8L1.6 5.8L2.9 3.8Z" fill="#b4b4b4"/></svg>
<div class="b lt3" style="left:714.3px;width:10.3px;border-radius:2.5px 0 0 2.5px;"></div>
<svg class="i" style="left:715.6px;top:451.4px" width="7.4" height="7" viewBox="0 0 7.4 7"><path d="M1.6 1.6H5.6V6.2H1.6Z" fill="#aeaeae" stroke="#858585" stroke-width="0.45"/><path d="M1.6 1.6L2.8 0.5H6.8L5.6 1.6M6.8 0.5V5L5.6 6.2" fill="#bababa" stroke="#858585" stroke-width="0.45"/><rect x="1.0" y="1.0" width="1.1" height="1.1" fill="#e89838"/></svg>
<div class="b lt3" style="left:724.6px;width:9.9px;border-radius:0;"></div>
<svg class="i" style="left:725.8px;top:451.4px" width="7.4" height="7" viewBox="0 0 7.4 7"><path d="M1.6 1.6H5.6V6.2H1.6Z" fill="#aeaeae" stroke="#858585" stroke-width="0.45"/><path d="M1.6 1.6L2.8 0.5H6.8L5.6 1.6M6.8 0.5V5L5.6 6.2" fill="#bababa" stroke="#858585" stroke-width="0.45"/><path d="M1.6 1.8V6" stroke="#e0a050" stroke-width="0.7"/></svg>
<div class="b dk" style="left:734.5px;width:9.9px;border-radius:0 2.5px 2.5px 0;"></div>
<svg class="i" style="left:735.8px;top:451.4px" width="7.4" height="7" viewBox="0 0 7.4 7"><path d="M1.6 1.6H5.6V6.2H1.6Z" fill="#777" stroke="#bbb" stroke-width="0.45"/><path d="M1.6 1.6L2.8 0.5H6.8L5.6 1.6M6.8 0.5V5L5.6 6.2" fill="#8a8a8a" stroke="#bbb" stroke-width="0.45"/><path d="M1.2 1.8L3.4 2.6V6.6L1.2 5.6Z" fill="#f0982c"/></svg>
<div class="b md2" style="left:747.2px;width:9.8px;border-radius:2.5px;"></div>
<svg class="i" style="left:748.4px;top:451.4px" width="7.6" height="7.2" viewBox="0 0 7.6 7.2"><circle cx="3.4" cy="4" r="1.7" fill="#f4f4f4"/><path d="M0.8 1.2L2.2 2.8M6 1.2L4.6 2.8M0.4 4H1.6M5.2 4H6.4M0.8 6.8L2.2 5.2M6 6.8L4.6 5.2M3.4 0.4V2.2M3.4 5.8V7" stroke="#ececec" stroke-width="0.55"/></svg>
<div class="b dk" style="left:760.2px;width:17.6px;border-radius:2.5px;"></div>
<svg class="i" style="left:763.4px;top:452.0px" width="5.6" height="5.6" viewBox="0 0 5.6 5.6"><circle cx="2.8" cy="2.8" r="2.2" fill="#6a6a6a" stroke="#808080" stroke-width="0.5"/><circle cx="2.8" cy="2.8" r="0.7" fill="#555"/></svg>
<svg class="i" style="left:773.0px;top:452.0px" width="3.2" height="6" viewBox="0 0 3.2 6"><path d="M0.3 2.2L1.6 0.2L2.9 2.2ZM0.3 3.8L1.6 5.8L2.9 3.8Z" fill="#b4b4b4"/></svg>
<div class="b lt" style="left:780.9px;width:9.3px;border-radius:2.5px 0 0 2.5px;"></div>
<svg class="i" style="left:782.0px;top:451.4px" width="7.4" height="7" viewBox="0 0 7.4 7"><path d="M1.2 3.2L3.6 0.9L6.2 3.4L3.8 5.8" stroke="#e8e8e8" stroke-width="1.3" fill="none"/><path d="M1.2 3.2L3.6 0.9L6.2 3.4L3.8 5.8" stroke="#777" stroke-width="0.4" fill="none"/></svg>
<div class="b dk" style="left:790.2px;width:15.8px;border-radius:0;"></div>
<svg class="i" style="left:792.2px;top:451.7px" width="7.6" height="6.4" viewBox="0 0 7.6 6.4"><rect x="2.9" y="0" width="1.8" height="6.4" rx="0.6" fill="#4a8cf0"/><path d="M0.2 1.4L2.4 3.2L0.2 5ZM7.4 1.4L5.2 3.2L7.4 5Z" fill="#c8c8c8"/></svg>
<div class="t" style="left:463.2px;top:438.3px;color:#f0f0f0;font-size:6.2px">(0) Circle</div>
<div class="t" style="left:438.2px;top:-3.2px;color:#f0f0f0;font-size:5.9px">User Persp</div>
<div class="t" style="left:442.4px;top:417.6px;color:#2040ff;font-size:5.6px">z</div>
<div class="t" style="left:454.4px;top:427.4px;color:#e01818;font-size:5.6px">x</div>
<div class="t" style="left:443.2px;top:432.6px;color:#18c018;font-size:5.6px">y</div></div>
</body></html>
